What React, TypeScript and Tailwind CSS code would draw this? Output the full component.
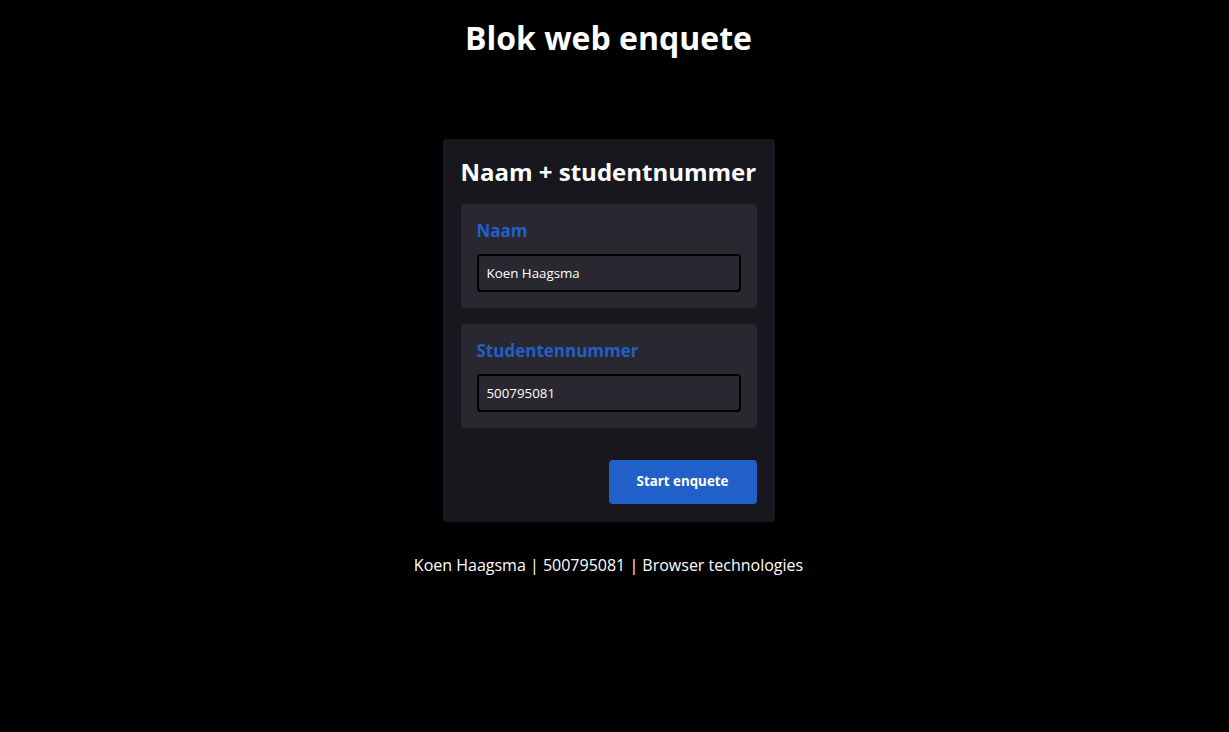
import { useState } from "react";

const Field = ({
  label,
  value,
  onChange,
}: {
  label: string;
  value: string;
  onChange: (v: string) => void;
}) => (
  <div className="rounded-[4px] bg-[#29272f] px-4 pt-[15px] pb-4">
    <label className="block text-[17px] leading-[23px] font-bold text-[#2160c8]">
      {label}
    </label>
    <input
      value={value}
      onChange={(e) => onChange(e.target.value)}
      className="mt-3 block h-[38px] w-full rounded-[4px] border-2 border-black bg-transparent px-2 text-[13.33px] text-white outline-none"
    />
  </div>
);

export default function App() {
  const [naam, setNaam] = useState("Koen Haagsma");
  const [nummer, setNummer] = useState("500795081");

  return (
    <div
      className="flex min-h-[732px] flex-col items-center bg-black pr-3 text-white"
      style={{ fontFamily: '"Open Sans", sans-serif' }}
    >
      <h1 className="mt-[16px] text-[32px] leading-[44px] font-bold">
        Blok web enquete
      </h1>

      <form
        className="mt-[79px] w-[332px] rounded-[4px] bg-[#18171d] px-[18px] pt-[16px] pb-[18px]"
        onSubmit={(e) => e.preventDefault()}
      >
        <h2 className="text-[24px] leading-[33px] font-bold">
          Naam + studentnummer
        </h2>
        <div className="mt-[16px] flex flex-col gap-4">
          <Field label="Naam" value={naam} onChange={setNaam} />
          <Field label="Studentennummer" value={nummer} onChange={setNummer} />
        </div>
        <div className="mt-8 flex justify-end">
          <button
            type="submit"
            className="h-[44px] w-[148px] rounded-[4px] bg-[#2160c8] text-[13.33px] font-bold text-white"
          >
            Start enquete
          </button>
        </div>
      </form>

      <p className="mt-[32px] text-[16px] leading-[22px]">
        Koen Haagsma | 500795081 | Browser technologies
      </p>
    </div>
  );
}
